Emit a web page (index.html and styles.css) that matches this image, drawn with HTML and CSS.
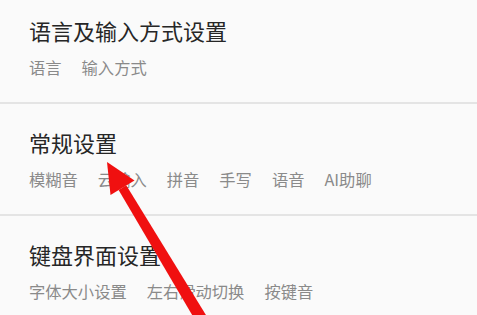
FILE: index.html
```html
<!DOCTYPE html>
<html lang="zh-CN">
<head>
<meta charset="utf-8">
<title>设置</title>
<link rel="stylesheet" href="styles.css">
</head>
<body>
<div class="page">
  <ul class="list">
    <li class="row">
      <div class="title">语言及输入方式设置</div>
      <div class="subs"><span>语言</span><span>输入方式</span></div>
    </li>
    <li class="row">
      <div class="title">常规设置</div>
      <div class="subs"><span>模糊音</span><span>云输入</span><span>拼音</span><span>手写</span><span>语音</span><span>AI助聊</span></div>
    </li>
    <li class="row">
      <div class="title">键盘界面设置</div>
      <div class="subs"><span>字体大小设置</span><span>左右滑动切换</span><span>按键音</span></div>
    </li>
  </ul>
  <svg class="arrow" width="477" height="315" viewBox="0 0 477 315" aria-hidden="true">
    <polygon points="107,162 134.5,180.5 110.5,194.9" fill="#f01010"/>
    <polygon points="126.4,185.4 207.1,316.9 196.9,323.1 118.6,190" fill="#f01010"/>
  </svg>
</div>
</body>
</html>
```
FILE: styles.css
```css
html, body {
  margin: 0;
  padding: 0;
  background: #fafafa;
}
body {
  width: 477px;
  height: 315px;
  overflow: hidden;
  font-family: "Noto Sans CJK SC", "Noto Sans", sans-serif;
}
.page {
  position: relative;
  width: 477px;
  height: 315px;
  overflow: hidden;
}
.list {
  list-style: none;
  margin: -8px 0 0 0;
  padding: 0;
}
.row {
  padding: 27px 0 26px 29px;
  border-bottom: 2px solid #e4e4e4;
  display: flex;
  flex-direction: column;
  gap: 18px;
}
.title {
  font-size: 22px;
  line-height: 22px;
  color: #262626;
  white-space: nowrap;
}
.subs {
  display: flex;
  gap: 20px;
  font-size: 16.3px;
  line-height: 17px;
  color: #8a8a8a;
  white-space: nowrap;
}
.arrow {
  position: absolute;
  left: 0;
  top: 0;
  pointer-events: none;
}
```
